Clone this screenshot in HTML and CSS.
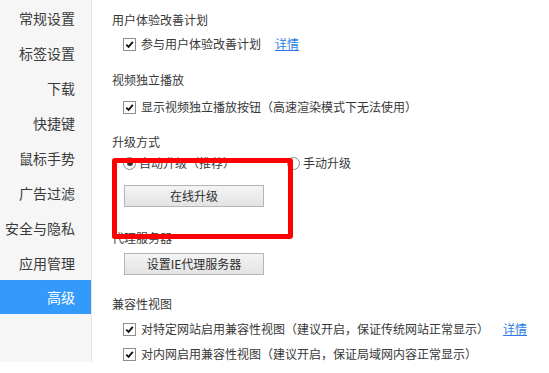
FILE: index.html
```html
<!DOCTYPE html>
<html lang="zh-CN">
<head>
<meta charset="utf-8">
<link rel="stylesheet" href="styles.css">
</head>
<body>
<div class="page">
  <nav class="sidebar">
    <div class="nav-item">常规设置</div>
    <div class="nav-item">标签设置</div>
    <div class="nav-item">下载</div>
    <div class="nav-item">快捷键</div>
    <div class="nav-item">鼠标手势</div>
    <div class="nav-item">广告过滤</div>
    <div class="nav-item">安全与隐私</div>
    <div class="nav-item">应用管理</div>
    <div class="nav-item active">高级</div>
  </nav>
  <main class="content">
    <div class="heading h1">用户体验改善计划</div>
    <div class="row r1"><span class="cb"><svg viewBox="0 0 12 12"><path d="M2.5 6.2 L5 8.6 L9.6 3.2" fill="none" stroke="#111" stroke-width="2"/></svg></span><span>参与用户体验改善计划</span><a class="link">详情</a></div>

    <div class="heading h2">视频独立播放</div>
    <div class="row r2"><span class="cb"><svg viewBox="0 0 12 12"><path d="M2.5 6.2 L5 8.6 L9.6 3.2" fill="none" stroke="#111" stroke-width="2"/></svg></span><span>显示视频独立播放按钮（高速渲染模式下无法使用）</span></div>

    <div class="heading h3">升级方式</div>
    <div class="row r3"><span class="radio on"></span><span>自动升级（推荐）</span><span class="radio second"></span><span>手动升级</span></div>
    <div class="btn b1">在线升级</div>

    <div class="heading h4">代理服务器</div>
    <div class="btn b2">设置IE代理服务器</div>

    <div class="heading h5">兼容性视图</div>
    <div class="row r4"><span class="cb"><svg viewBox="0 0 12 12"><path d="M2.5 6.2 L5 8.6 L9.6 3.2" fill="none" stroke="#111" stroke-width="2"/></svg></span><span>对特定网站启用兼容性视图（建议开启，保证传统网站正常显示）</span><a class="link">详情</a></div>
    <div class="row r5"><span class="cb"><svg viewBox="0 0 12 12"><path d="M2.5 6.2 L5 8.6 L9.6 3.2" fill="none" stroke="#111" stroke-width="2"/></svg></span><span>对内网启用兼容性视图（建议开启，保证局域网内容正常显示）</span></div>

    <div class="highlight"></div>
  </main>
</div>
</body>
</html>
```

FILE: styles.css
```css
html, body {
  margin: 0;
  padding: 0;
  background: #ffffff;
}
body {
  font-family: "Noto Sans CJK SC", "Liberation Sans", sans-serif;
  color: #383838;
  width: 549px;
  height: 373px;
  overflow: hidden;
}
.page {
  display: flex;
  align-items: flex-start;
  height: 373px;
}
.sidebar {
  width: 91px;
  height: 361px;
  padding-top: 1px;
  background: #f6f6f6;
  border-right: 1px solid #e6e6e6;
  box-sizing: content-box;
  flex-shrink: 0;
}
.nav-item {
  height: 35px;
  line-height: 35px;
  text-align: right;
  padding-right: 16px;
  font-size: 14px;
  color: #3a3a3a;
}
.nav-item.active {
  background: #3399fb;
  color: #ffffff;
  height: 34px;
  line-height: 34px;
  margin-top: -1px;
}
.content {
  position: relative;
  flex: 1;
  padding-left: 20px;
  font-size: 12px;
}
.heading {
  height: 20px;
  line-height: 20px;
  font-size: 12px;
  color: #383838;
}
.row {
  display: flex;
  align-items: center;
  height: 20px;
  line-height: 20px;
  padding-left: 11px;
  white-space: nowrap;
}
.cb {
  width: 11px;
  height: 11px;
  border: 1px solid #8e8e8e;
  background: #fff;
  margin-right: 5px;
  display: inline-flex;
  flex-shrink: 0;
}
.cb svg {
  width: 11px;
  height: 11px;
}
.link {
  color: #2b7ce5;
  text-decoration: underline;
  margin-left: 14px;
}
.radio {
  width: 11px;
  height: 11px;
  border: 1px solid #8a8a8a;
  border-radius: 50%;
  background: #fff;
  margin-right: 3px;
  position: relative;
  flex-shrink: 0;
}
.radio.on::after {
  content: "";
  position: absolute;
  left: 2.5px;
  top: 2.5px;
  width: 6px;
  height: 6px;
  border-radius: 50%;
  background: #333;
}
.radio.second {
  margin-left: 52px;
}
.btn {
  width: 138px;
  height: 20px;
  line-height: 20px;
  margin-left: 12px;
  text-align: center;
  border: 1px solid #b5b5b5;
  background: linear-gradient(#f4f4f4, #e3e3e3);
  font-size: 12px;
  color: #2e2e2e;
}
.h1 { margin-top: 10px; }
.r1 { margin-top: 4px; }
.h2 { margin-top: 16px; }
.r2 { margin-top: 7px; }
.h3 { margin-top: 15px; }
.r3 { margin-top: 1px; }
.b1 { margin-top: 12px; }
.h4 { margin-top: 21px; }
.b2 { margin-top: 5px; }
.h5 { margin-top: 19px; }
.r4 { margin-top: 5px; }
.r5 { margin-top: 5px; }
.highlight {
  position: absolute;
  left: 20px;
  top: 158px;
  width: 171px;
  height: 71px;
  border: 5px solid #ff0000;
  border-radius: 3px;
}
```
